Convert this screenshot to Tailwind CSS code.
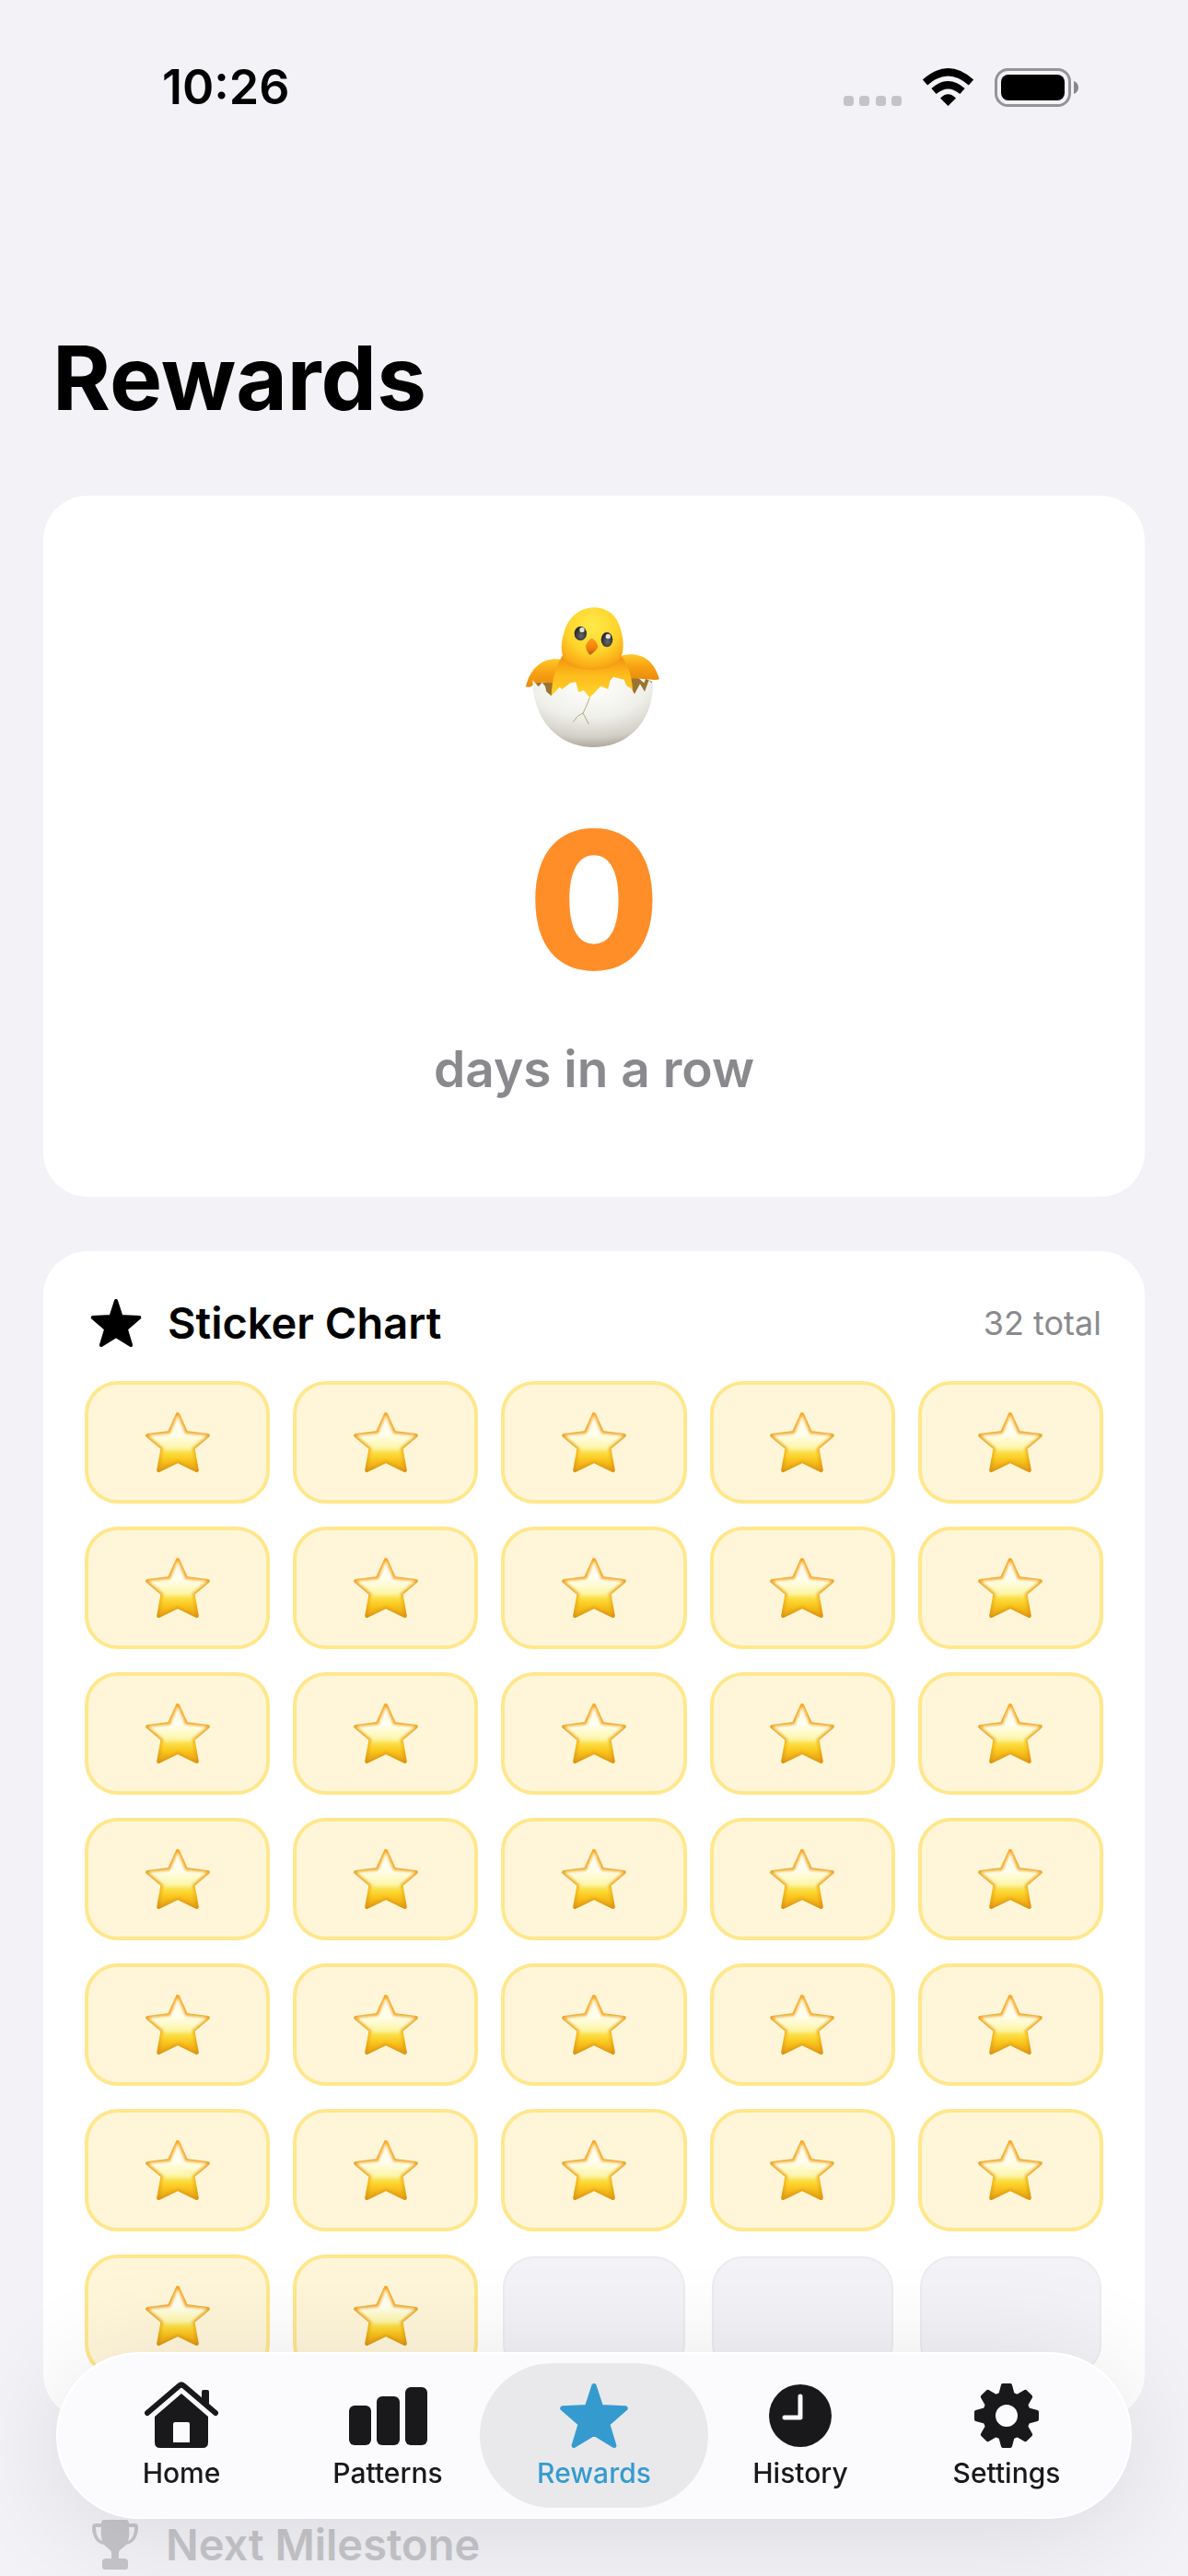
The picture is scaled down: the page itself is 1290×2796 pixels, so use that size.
<!DOCTYPE html>
<html lang="en">
<head>
  <meta charset="UTF-8" />
  <meta name="viewport" content="width=device-width, initial-scale=1.0" />
  <title>Rewards</title>
  <script src="https://cdn.jsdelivr.net/npm/@tailwindcss/browser@4"></script>
</head>
<body class="bg-[#f2f2f7] min-h-screen font-['Inter','Liberation_Sans',sans-serif] text-black">
  <!-- shared icons -->
  <svg class="absolute w-0 h-0" aria-hidden="true">
    <defs>
      <linearGradient id="starFill" x1="0" y1="72" x2="0" y2="266" gradientUnits="userSpaceOnUse">
        <stop offset="0" stop-color="#fffbe6" />
        <stop offset=".35" stop-color="#fffff0" />
        <stop offset=".6" stop-color="#fdf5a8" />
        <stop offset=".66" stop-color="#fbe145" />
        <stop offset=".8" stop-color="#fbc51c" />
        <stop offset="1" stop-color="#e09a12" />
      </linearGradient>
      <linearGradient id="starEdge" x1="0" y1="72" x2="0" y2="266" gradientUnits="userSpaceOnUse">
        <stop offset="0" stop-color="#fda51f" />
        <stop offset=".5" stop-color="#eda82a" />
        <stop offset=".7" stop-color="#f4bb1c" />
        <stop offset="1" stop-color="#dc9210" />
      </linearGradient>
      <filter id="starSoft" x="-10%" y="-10%" width="120%" height="120%"><feGaussianBlur stdDeviation="4" /></filter>
    </defs>
    <symbol id="sticker" viewBox="82 66 210 206">
      <path d="M187 78 L214 138 L285 147 L236 188 L249 260 L187 230 L125 260 L138 188 L89 147 L160 138 Z" fill="url(#starEdge)" stroke="url(#starEdge)" stroke-width="13" stroke-linejoin="round" />
      <path d="M187 86 L210 143 L277 149 L231 187 L243 253 L187 224 L131 253 L143 187 L97 149 L164 143 Z" fill="url(#starFill)" stroke="url(#starFill)" stroke-width="6" stroke-linejoin="round" filter="url(#starSoft)" />
    </symbol>
    <symbol id="star" viewBox="172 382 176 170">
      <path d="M260 394 L277 446 L337 449 L293 487 L309 540 L260 510 L211 540 L227 487 L183 449 L243 446 Z" fill="currentColor" stroke="currentColor" stroke-width="12" stroke-linejoin="round" />
    </symbol>
  </svg>

  <!-- status bar -->
  <header class="h-[190px] pl-[176px] pr-[118px] flex items-center justify-between">
    <time class="text-[52px] leading-[60px] font-semibold">10:26</time>
    <svg class="w-[257px] h-[44px]" viewBox="915 72 257 44" aria-hidden="true">
      <g fill="#c3c3c8">
        <rect x="916" y="103" width="11" height="11" rx="3.500" />
        <rect x="933" y="103" width="11" height="11" rx="3.500" />
        <rect x="951" y="103" width="11" height="11" rx="3.500" />
        <rect x="968" y="103" width="11" height="11" rx="3.500" />
      </g>
      <path d="M1029.500 114 L1021 105.500 Q1029.500 97 1038 105.500 Z" fill="#000" />
      <g fill="none" stroke="#000" stroke-width="8">
        <path d="M1014 98 Q1029.500 84.500 1045 98" />
        <path d="M1004.500 88.500 Q1029.500 66 1054.500 88.500" />
      </g>
      <rect x="1081.500" y="74.500" width="80" height="39" rx="13" fill="none" stroke="#949497" stroke-width="3" />
      <rect x="1087" y="80" width="69" height="28" rx="8" fill="#000" />
      <path d="M1166 87 Q1171 89 1171 94 Q1171 99 1166 101 Z" fill="#88888b" />
    </svg>
  </header>

  <main class="px-[47px] pt-[160px]">
    <h1 class="pl-2.5 text-[96px] leading-[120px] font-bold">Rewards</h1>

    <!-- streak -->
    <section class="mt-[68px] pt-[92px] pb-[107px] bg-white rounded-[48px] flex flex-col items-center">
      <svg class="w-[210px] h-[210px]" viewBox="0 0 630 630" role="img" aria-label="Hatching chick">
        <defs>
          <radialGradient id="head" cx=".5" cy=".3" r=".75">
            <stop offset="0" stop-color="#ffe94a" />
            <stop offset=".55" stop-color="#ffd52c" />
            <stop offset=".85" stop-color="#fbae18" />
            <stop offset="1" stop-color="#f09410" />
          </radialGradient>
          <linearGradient id="chest" x1="0" y1="0" x2="0" y2="1">
            <stop offset="0" stop-color="#f28f0c" />
            <stop offset=".4" stop-color="#fdbb1c" />
            <stop offset="1" stop-color="#ffdc2e" />
          </linearGradient>
          <linearGradient id="wing" x1="0" y1="0" x2="0" y2="1">
            <stop offset="0" stop-color="#ffc928" />
            <stop offset=".5" stop-color="#f7a012" />
            <stop offset="1" stop-color="#e98b0c" />
          </linearGradient>
          <radialGradient id="shell" cx=".48" cy=".1" r=".95">
            <stop offset="0" stop-color="#fffffd" />
            <stop offset=".5" stop-color="#f0f0eb" />
            <stop offset=".8" stop-color="#d2cfc6" />
            <stop offset="1" stop-color="#a39a90" />
          </radialGradient>
          <linearGradient id="beak" x1="0" y1="0" x2="0" y2="1">
            <stop offset="0" stop-color="#ff9d16" />
            <stop offset=".6" stop-color="#f47f0c" />
            <stop offset="1" stop-color="#b95a08" />
          </linearGradient>
          <radialGradient id="eye" cx=".55" cy=".65" r=".6">
            <stop offset="0" stop-color="#66686a" />
            <stop offset="1" stop-color="#222426" />
          </radialGradient>
        </defs>
        <path d="M118 330 L150 333 L440 318 L478 318 L505 330 L480 400 L140 400 Z" fill="#9a7430" />
        <path d="M460 318 L478 334 L484 318 Z" fill="#fff" />
        <path d="M210 258 C160 248 110 275 93 346 C105 350 118 343 122 336 C150 330 165 332 195 338 Z" fill="url(#wing)" />
        <path d="M405 245 C450 232 508 245 528 322 C505 328 480 318 436 320 Z" fill="url(#wing)" />
        <path d="M212 245 C190 280 178 325 176 375 L300 400 L442 370 C440 320 430 280 404 245 Z" fill="url(#chest)" />
        <path d="M316 88 C262 90 230 125 217 170 C205 210 205 250 230 272 C260 296 365 300 394 265 C414 242 414 200 402 160 C390 112 360 90 316 88 Z" fill="url(#head)" />
        <ellipse cx="271" cy="173" rx="20" ry="23" fill="url(#eye)" />
        <ellipse cx="357" cy="193" rx="19" ry="24" fill="url(#eye)" />
        <circle cx="276" cy="161" r="8" fill="#fff" opacity=".85" />
        <circle cx="361" cy="182" r="8" fill="#fff" opacity=".85" />
        <path d="M308 189 C315 189 328 208 328 216 C326 224 310 240 302 242 C295 238 288 222 288 213 C290 206 301 190 308 189 Z" fill="url(#beak)" />
        <path d="M115 324 L134 346 L146 332 L156 345 L160 362 L176 376 L203 347 L211 355 L238 334 L256 331 L265 364 L282 358 L301 382 L337 344 L361 354 L367 327 L378 314 L413 323 L421 343 L436 352 L447 370 L465 337 L480 362 L494 325 L507 338 C507 455 430 543 313 543 C200 543 115 455 115 324 Z" fill="url(#shell)" />
        <path d="M301 382 L289 412 L279 432 M279 432 Q260 438 247 461 M279 432 L298 468" fill="none" stroke="#b5a878" stroke-width="3" />
      </svg>
      <p class="mt-8 text-[208px] leading-[208px] font-extrabold text-[#ff8d28]">0</p>
      <p class="mt-12 text-[55px] leading-[64px] font-semibold text-[#8a8a8e]">days in a row</p>
    </section>

    <!-- stickers -->
    <section class="mt-[59px] p-[45px] bg-white rounded-[48px]">
      <div class="h-[66px] flex items-center">
        <span class="w-[68px] flex justify-center">
          <svg class="w-[58px] h-[56px]" aria-hidden="true"><use href="#star" /></svg>
        </span>
        <h2 class="ml-[22px] text-[47px] leading-[60px] font-semibold">Sticker Chart</h2>
        <p class="ml-auto pr-0.5 text-[36px] leading-[44px] text-[#8a8a8e]">32 total</p>
      </div>
      <ul id="stickers" class="mt-[30px] grid grid-cols-5 gap-[25px]"></ul>
    </section>

    <!-- milestone -->
    <section class="mt-[59px] px-[45px] pt-[45px] text-[#c6c6ca]">
      <div class="h-[66px] flex items-center">
        <span class="w-[66px] flex justify-center">
          <svg class="w-[50px] h-[54px]" viewBox="0 0 50 54" fill="currentColor" aria-hidden="true">
            <path d="M13 0 H37 Q40 0 40 4 H46 Q50 4 50 8 C50 18 45 26 37 27 C34 31 29 32 29 36 V42 H35 Q39 42 39 46 V51 Q39 54 36 54 H14 Q11 54 11 51 V46 Q11 42 15 42 H21 V36 C21 32 16 31 13 27 C5 26 0 18 0 8 Q0 4 4 4 H10 Q10 0 13 0 Z M10 8 H4 C4 15 6 21 11 23 Q9 17 10 8 Z M40 8 Q41 17 39 23 C44 21 46 15 46 8 Z" fill-rule="evenodd" />
          </svg>
        </span>
        <h2 class="ml-[22px] text-[47px] leading-[60px] font-semibold">Next Milestone</h2>
      </div>
    </section>
  </main>

  <!-- tab bar -->
  <nav class="fixed inset-x-[61px] bottom-[62px] px-[22px] py-2.5 grid grid-cols-5 rounded-full bg-[#fbfbfe] border-2 border-white shadow-[0_12px_120px_rgba(0,0,0,0.11)] text-[30px] leading-[36px] font-medium text-[#19191c]">
    <a href="#home" class="h-[157px] pt-[19px] flex flex-col items-center gap-1.5">
      <svg class="w-[80px] h-[76px]" viewBox="0 -2 80 76" aria-hidden="true">
        <path d="M3 33 L37 4 Q40 1 43 4 L77 33" fill="none" stroke="currentColor" stroke-width="6" stroke-linecap="round" stroke-linejoin="round" />
        <path d="M62 20 V10 Q62 8 64 8 H68 Q70 8 70 10 V27 Z" fill="currentColor" />
        <path d="M40 12 L69 37 V65 Q69 71 63 71 H17 Q11 71 11 65 V37 Z M33 43 Q31 43 31 45 V65 H49 V45 Q49 43 47 43 Z" fill="currentColor" fill-rule="evenodd" />
      </svg>
      <span>Home</span>
    </a>
    <a href="#patterns" class="h-[157px] pt-[19px] flex flex-col items-center gap-1.5">
      <svg class="w-[85px] h-[76px]" viewBox="0 -7 85 76" fill="currentColor" aria-hidden="true">
        <rect x="0" y="20" width="24" height="43" rx="6" />
        <rect x="30" y="10" width="25" height="53" rx="6" />
        <rect x="61" y="0" width="24" height="63" rx="6" />
      </svg>
      <span>Patterns</span>
    </a>
    <a href="#rewards" aria-current="page" class="-mx-3 h-[157px] pt-[19px] flex flex-col items-center gap-1.5 rounded-full bg-[#e9e9ec] text-[#359bcf]">
      <svg class="w-[78px] h-[76px]" aria-hidden="true"><use href="#star" /></svg>
      <span>Rewards</span>
    </a>
    <a href="#history" class="h-[157px] pt-[19px] flex flex-col items-center gap-1.5">
      <svg class="w-[68px] h-[76px]" viewBox="0 -4 68 76" aria-hidden="true">
        <circle cx="34" cy="34" r="34" fill="currentColor" />
        <path d="M34 13 V36 H17" fill="none" stroke="#fbfbfe" stroke-width="5" stroke-linecap="round" stroke-linejoin="round" />
      </svg>
      <span>History</span>
    </a>
    <a href="#settings" class="h-[157px] pt-[19px] flex flex-col items-center gap-1.5">
      <svg class="w-[72px] h-[76px]" viewBox="-36 -38 72 76" fill="currentColor" aria-hidden="true">
        <circle r="19" fill="none" stroke="currentColor" stroke-width="14" />
        <g stroke="currentColor" stroke-width="4" stroke-linejoin="round">
          <path id="tooth" d="M-7 -22 L-4 -33 H4 L7 -22 Z" />
          <use href="#tooth" transform="rotate(45)" />
          <use href="#tooth" transform="rotate(90)" />
          <use href="#tooth" transform="rotate(135)" />
          <use href="#tooth" transform="rotate(180)" />
          <use href="#tooth" transform="rotate(225)" />
          <use href="#tooth" transform="rotate(270)" />
          <use href="#tooth" transform="rotate(315)" />
        </g>
      </svg>
      <span>Settings</span>
    </a>
  </nav>

  <script>
    const earned = 32;
    const slots = 35;
    const list = document.getElementById('stickers');
    for (let i = 0; i < slots; i++) {
      const li = document.createElement('li');
      if (i < earned) {
        li.className = 'h-[133px] flex items-center justify-center rounded-[36px] border-4 border-[#ffe78c] bg-[#fff6da]';
        li.innerHTML = '<svg class="w-[70px] h-[69px]" role="img" aria-label="Star"><use href="#sticker" /></svg>';
      } else {
        li.className = 'h-[129px] m-0.5 rounded-[34px] border-2 border-[#ececf0] bg-[#f2f2f7]';
      }
      list.appendChild(li);
    }
  </script>
</body>
</html>
